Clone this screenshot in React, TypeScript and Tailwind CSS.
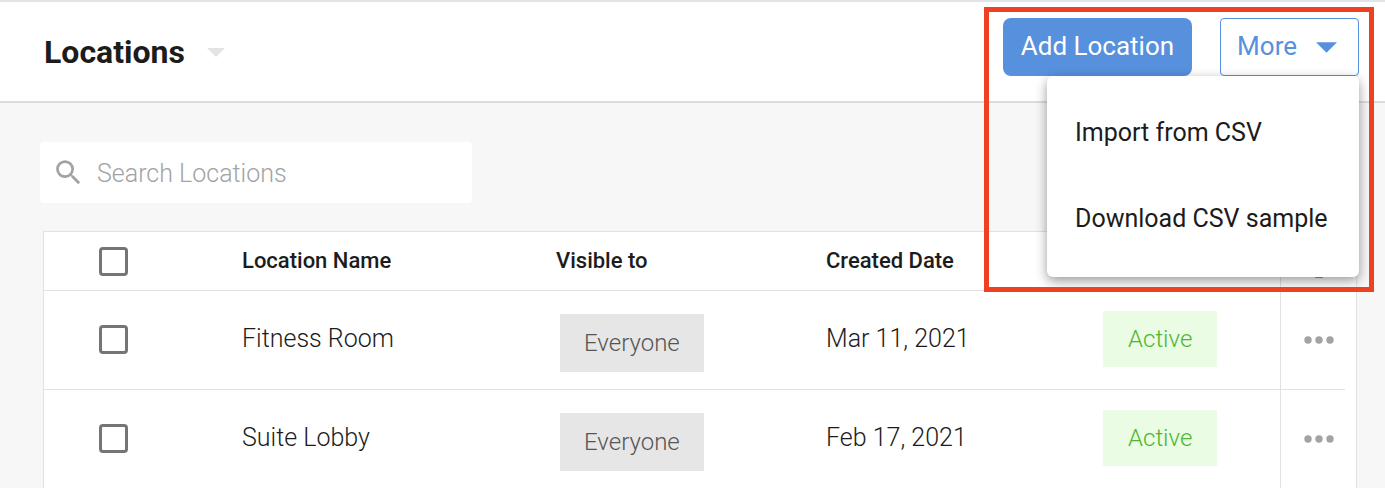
import { MdSearch, MdSettings } from "react-icons/md";

const rows = [
  { name: "Fitness Room", visibleTo: "Everyone", created: "Mar 11, 2021", status: "Active" },
  { name: "Suite Lobby", visibleTo: "Everyone", created: "Feb 17, 2021", status: "Active" },
];

const menuItems = ["Import from CSV", "Download CSV sample"];

function Caret({ className }: { className: string }) {
  return (
    <svg viewBox="0 0 20 10" className={className} fill="currentColor" aria-hidden="true">
      <path d="M0 0h20L10 10z" />
    </svg>
  );
}

function Checkbox({ label }: { label: string }) {
  return (
    <input
      type="checkbox"
      aria-label={label}
      className="block size-[29px] appearance-none rounded-sm border-3 border-[#757575] bg-white checked:bg-[#757575]"
    />
  );
}

function Header() {
  return (
    <header className="flex items-start justify-between border-t-2 border-b-2 border-t-[#e1e5e9] border-b-[#dcdcdc] bg-white pt-4 pr-[26px] pb-[25px] pl-11">
      <h1 className="pt-4">
        <button type="button" className="flex items-center gap-[22px] text-[32px] leading-9 font-bold">
          Locations
          <Caret className="h-[9px] w-[18px] text-[#e4e4e4]" />
        </button>
      </h1>

      <div className="relative flex gap-7 text-[26px]">
        <button type="button" className="h-[58px] rounded-lg bg-[#5790dc] px-[18px] pb-0.5 text-white">
          Add Location
        </button>
        <button
          type="button"
          aria-haspopup="menu"
          aria-expanded="true"
          className="flex h-[58px] items-center gap-[19px] rounded-sm border border-[#5790dc] pr-[21px] pl-4 text-[#5790dc]"
        >
          <span className="pb-0.5">More</span>
          <Caret className="h-[11px] w-[21px]" />
        </button>

        <ul
          role="menu"
          className="absolute top-full right-0 z-10 min-w-[312px] rounded-md bg-white pt-[14px] pb-[15px] text-[25px] whitespace-nowrap shadow-[0_4px_12px_rgba(0,0,0,0.4)]"
        >
          {menuItems.map((item) => (
            <li key={item} role="none">
              <button type="button" role="menuitem" className="block h-[86px] w-full px-7 text-left">
                {item}
              </button>
            </li>
          ))}
        </ul>

        <div className="pointer-events-none absolute -top-[11px] -right-[15px] -left-[19px] z-20 h-[285px] border-5 border-[#ee4023]" />
      </div>
    </header>
  );
}

function LocationsTable() {
  return (
    <div className="mt-7 mr-7 ml-[43px] border border-b-0 border-[#e2e2e4] bg-white pr-[11px]">
      <table className="w-full table-fixed border-separate border-spacing-0 text-left">
        <colgroup>
          <col className="w-[198px]" />
          <col />
          <col className="w-[270px]" />
          <col className="w-[277px]" />
          <col className="w-[177px]" />
          <col className="w-[65px]" />
        </colgroup>
        <thead className="text-[22px]">
          <tr className="h-[59px] [&>th]:border-b [&>th]:border-[#e2e2e4] [&>th]:font-medium">
            <th className="pl-[55px]">
              <Checkbox label="Select all locations" />
            </th>
            <th className="pb-0.5">Location Name</th>
            <th className="pb-0.5">Visible to</th>
            <th className="pb-0.5">Created Date</th>
            <th className="pb-0.5">Status</th>
            <th className="border-l">
              <button type="button" aria-label="Table settings" className="ml-[17px] block text-[#757575]">
                <MdSettings className="size-[42px]" />
              </button>
            </th>
          </tr>
        </thead>
        <tbody className="text-[25px] font-light [&>tr:last-child>td]:border-b-0">
          {rows.map((row) => (
            <tr key={row.name} className="h-[99px] last:h-[98px] [&>td]:border-b [&>td]:border-[#e2e2e4]">
              <td className="pb-0.5 pl-[55px]">
                <Checkbox label={`Select ${row.name}`} />
              </td>
              <td className="pb-0.5">{row.name}</td>
              <td className="pt-[23px] pl-1 align-top">
                <span className="inline-flex h-[58px] items-center bg-[#e6e6e6] px-6 text-2xl text-[#555]">
                  {row.visibleTo}
                </span>
              </td>
              <td className="pb-0.5">{row.created}</td>
              <td className="pt-5 align-top">
                <span className="inline-flex h-14 items-center bg-[#eafce4] px-[25px] text-2xl text-[#4fb52e]">
                  {row.status}
                </span>
              </td>
              <td className="border-l">
                <button type="button" aria-label={`Actions for ${row.name}`} className="ml-[23px] block">
                  <svg viewBox="0 0 30 8" className="h-2 w-[30px]" fill="#a3a3a3">
                    <circle cx="4" cy="4" r="3.7" />
                    <circle cx="15" cy="4" r="3.7" />
                    <circle cx="26" cy="4" r="3.7" />
                  </svg>
                </button>
              </td>
            </tr>
          ))}
        </tbody>
      </table>
    </div>
  );
}

export default function App() {
  return (
    <div className="min-h-screen bg-[#f7f7f7] font-[Roboto,sans-serif] text-[#1c1c1c]">
      <Header />
      <main className="pt-[39px]">
        <label className="ml-10 flex h-[61px] w-[432px] items-center gap-3 rounded-sm bg-white pl-3">
          <MdSearch className="size-[33px] shrink-0 text-[#a3a3a3]" />
          <input
            type="search"
            placeholder="Search Locations"
            aria-label="Search Locations"
            className="min-w-0 flex-1 bg-transparent pt-0.5 text-[25px] font-light outline-none placeholder:text-[#a3a3a3]"
          />
        </label>
        <LocationsTable />
      </main>
    </div>
  );
}
